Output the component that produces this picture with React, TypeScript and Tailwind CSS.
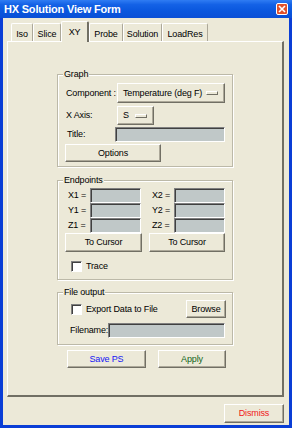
import React from 'react';

const raised =
  'bg-[#ece9d8] border border-t-white border-l-white border-r-[#716f64] border-b-[#716f64] shadow-[inset_-1px_-1px_0_#aca899]';

function Btn({ children, className = '' }: { children?: React.ReactNode; className?: string }) {
  return <div className={`flex items-center justify-center ${raised} ${className}`}>{children}</div>;
}

function Field({ className = '' }: { className?: string }) {
  return (
    <div
      className={`h-[15px] bg-[#c0c8c8] border border-t-[#808080] border-l-[#808080] border-r-white border-b-white shadow-[inset_1px_1px_0_#404040] ${className}`}
    />
  );
}

function OptionMenu({ label, className = '' }: { label: string; className?: string }) {
  return (
    <Btn className={`!justify-between pl-[5px] pr-[6px] ${className}`}>
      <span>{label}</span>
      <span className="w-[12px] h-[4px] border border-t-white border-l-white border-r-[#716f64] border-b-[#716f64]" />
    </Btn>
  );
}

function Check() {
  return (
    <div className="w-[11px] h-[11px] bg-white border border-t-[#808080] border-l-[#808080] border-r-white border-b-white shadow-[inset_1px_1px_0_#404040]" />
  );
}

function Group({ title, className = '', children }: { title: string; className?: string; children: React.ReactNode }) {
  return (
    <div className={`relative w-[176px] border border-[#bcb9a8] shadow-[inset_1px_1px_0_#fff,1px_1px_0_#fff] ${className}`}>
      <span className="absolute left-[5px] top-[-7px] bg-[#ece9d8] px-[1px] leading-[12px]">{title}</span>
      {children}
    </div>
  );
}

function Tab({ label, width, active = false }: { label: string; width: string; active?: boolean }) {
  if (active) {
    return (
      <div
        className={`relative z-10 -mb-px h-[21px] ${width} flex justify-center pt-[5px] bg-[#ece9d8] border-t border-l border-white border-r-2 border-r-[#716f64] rounded-t-[2px]`}
      >
        {label}
      </div>
    );
  }
  return (
    <div
      className={`h-[18px] ${width} flex justify-center pt-[5px] border-t border-l border-white border-r border-r-[#aca899] rounded-t-[2px]`}
    >
      {label}
    </div>
  );
}

export default function App() {
  return (
    <div className="w-[292px] h-[428px] bg-[#0a3ed6] flex flex-col font-['Liberation_Sans',Arial,sans-serif] text-[9px] leading-[11px] tracking-[-0.15px] whitespace-nowrap text-black">
      {/* title bar */}
      <div className="h-[18px] flex items-center justify-between pl-[4px] pr-[4px] bg-[linear-gradient(to_bottom,#2f7cf3_0%,#1462e6_25%,#0a57de_60%,#0a4fd6_100%)]">
        <span className="text-white font-bold text-[11px] leading-[13px] tracking-[-0.2px]">HX Solution View Form</span>
        <div className="w-[12px] h-[12px] rounded-[2px] border border-white bg-[#e2502a] flex items-center justify-center">
          <svg width="8" height="8" viewBox="0 0 8 8">
            <path d="M1 1 L7 7 M7 1 L1 7" stroke="white" strokeWidth="1.6" />
          </svg>
        </div>
      </div>

      {/* client area */}
      <div className="flex-1 mx-[3px] mb-[3px] bg-[#ece9d8] flex flex-col">
        <div className="h-[23px] flex items-end pl-[8px]">
          <Tab label="Iso" width="w-[22px]" />
          <Tab label="Slice" width="w-[28px]" />
          <Tab label="XY" width="w-[28px]" active />
          <Tab label="Probe" width="w-[34px]" />
          <Tab label="Solution" width="w-[39px]" />
          <Tab label="LoadRes" width="w-[46px]" />
        </div>

        <div className="ml-[4px] w-[277px] h-[356px] flex flex-col border-t border-l border-white border-r-2 border-b-2 border-r-[#716f64] border-b-[#716f64]">
          {/* Graph */}
          <Group title="Graph" className="mt-[32px] ml-[49px] h-[93px] pt-[8px] pl-[8px]">
            <div className="flex items-center h-[20px]">
              <span className="w-[51px]">Component :</span>
              <OptionMenu label="Temperature (deg F)" className="w-[108px] h-[20px]" />
            </div>
            <div className="flex items-center h-[19px] mt-[3px]">
              <span className="w-[51px]">X Axis:</span>
              <OptionMenu label="S" className="w-[37px] h-[19px]" />
            </div>
            <div className="flex items-center h-[15px] mt-[2px]">
              <span className="w-[49px] pl-[1px]">Title:</span>
              <Field className="w-[110px]" />
            </div>
            <Btn className="mt-[2px] -ml-px w-[96px] h-[18px]">Options</Btn>
          </Group>

          {/* Endpoints */}
          <Group title="Endpoints" className="mt-[13px] ml-[49px] h-[100px] pt-[7px]">
            {[
              ['X1 =', 'X2 ='],
              ['Y1 =', 'Y2 ='],
              ['Z1 =', 'Z2 ='],
            ].map(([a, b]) => (
              <div key={a} className="flex items-center h-[15px] pl-[10px]">
                <span className="w-[22px]">{a}</span>
                <Field className="w-[51px]" />
                <span className="w-[22px] ml-[11px]">{b}</span>
                <Field className="w-[51px]" />
              </div>
            ))}
            <div className="flex gap-[7px] pl-[7px]">
              <Btn className="w-[77px] h-[19px]">To Cursor</Btn>
              <Btn className="w-[76px] h-[19px]">To Cursor</Btn>
            </div>
            <div className="flex items-center gap-[4px] pl-[13px] mt-[9px]">
              <Check />
              <span>Trace</span>
            </div>
          </Group>

          {/* File output */}
          <Group title="File output" className="mt-[12px] ml-[49px] h-[53px] pt-[7px]">
            <div className="flex items-center justify-between h-[18px] pl-[13px] pr-[6px]">
              <div className="flex items-center gap-[4px]">
                <Check />
                <span>Export Data to File</span>
              </div>
              <Btn className="w-[40px] h-[18px]">Browse</Btn>
            </div>
            <div className="flex items-center h-[15px] mt-[5px] pl-[12px]">
              <span className="w-[38px]">Filename:</span>
              <Field className="w-[117px]" />
            </div>
          </Group>

          <div className="flex gap-[12px] ml-[59px] mt-[5px]">
            <Btn className="w-[79px] h-[18px] text-[#1515f5]">Save PS</Btn>
            <Btn className="w-[68px] h-[18px] text-[#11661a]">Apply</Btn>
          </div>
        </div>

        <div className="flex justify-end mr-[5px] mt-[7px]">
          <Btn className="w-[60px] h-[19px] text-[#f01818]">Dismiss</Btn>
        </div>
      </div>
    </div>
  );
}
